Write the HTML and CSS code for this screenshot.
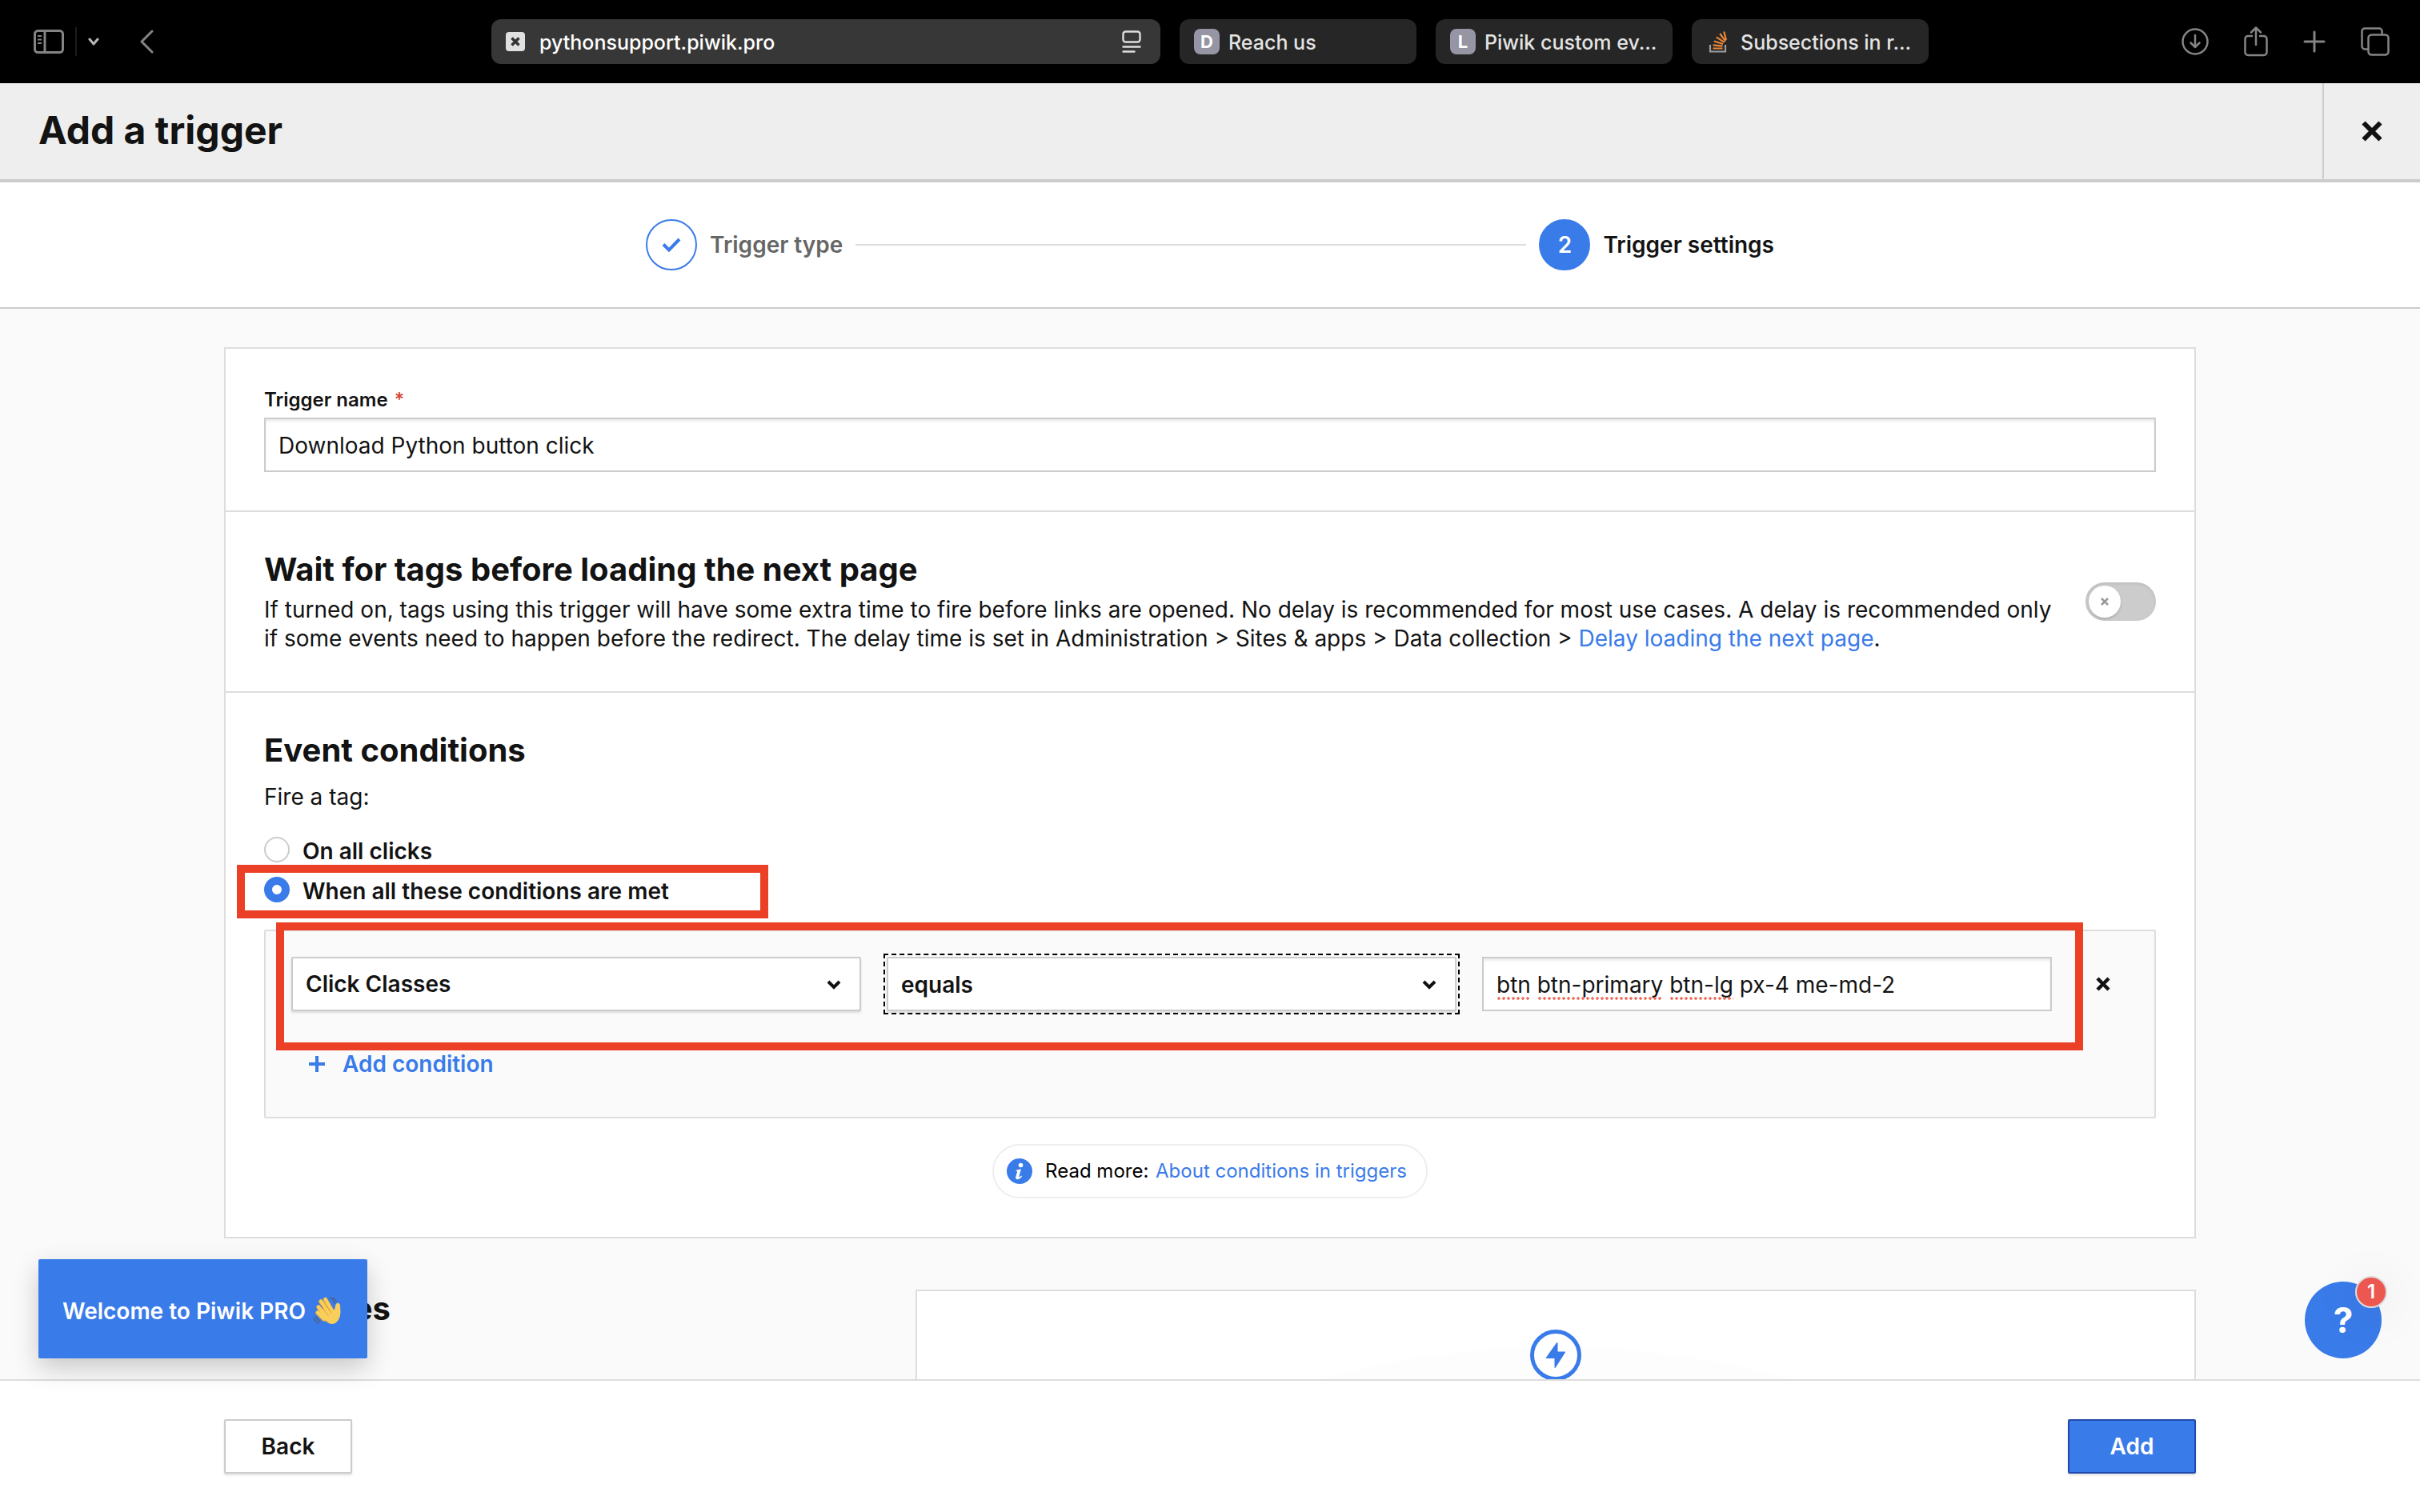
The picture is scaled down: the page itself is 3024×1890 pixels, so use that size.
FILE: index.html
```html
<!DOCTYPE html>
<html lang="en">
<head>
<meta charset="utf-8">
<title>Add a trigger</title>
<link rel="stylesheet" href="styles.css">
</head>
<body>
<nav class="browser" aria-label="Browser">
  <div class="browser-left">
    <button class="tool" aria-label="Sidebar"><svg width="38" height="30" viewBox="0 0 38 30" fill="none" stroke="currentColor" stroke-width="3"><rect x="1.5" y="1.5" width="35" height="27" rx="4"/><path d="M14 2v26"/><path d="M5 8h5M5 12.500h5M5 17h5" stroke-width="2"/></svg></button>
    <span class="tool-line"></span>
    <button class="tool tool-light" aria-label="Sidebar menu"><svg width="14" height="10" viewBox="0 0 14 10" fill="none" stroke="currentColor" stroke-width="3" stroke-linecap="round" stroke-linejoin="round"><path d="M2 2l5 6 5-6"/></svg></button>
    <button class="tool tool-back" aria-label="Go back"><svg width="18" height="30" viewBox="0 0 18 30" fill="none" stroke="currentColor" stroke-width="3" stroke-linecap="round" stroke-linejoin="round"><path d="M16 2L3 15l13 13"/></svg></button>
  </div>
  <div class="browser-tabs">
    <div class="address">
      <svg width="24" height="24" viewBox="0 0 24 24"><rect width="24" height="24" rx="4" fill="#e0e0e0"/><path d="M7.500 7.500l9 9M16.500 7.500l-9 9" stroke="#333" stroke-width="3.500"/></svg>
      <span class="tab-text address-text">pythonsupport.piwik.pro</span>
      <svg width="24" height="28" viewBox="0 0 24 28" fill="none" stroke="#ddd" stroke-width="2.400" stroke-linecap="round"><rect x="1.500" y="1.500" width="21" height="13" rx="3"/><path d="M1.500 20.500h21M1.500 26.500h14"/></svg>
    </div>
    <a class="tab" href="#"><span class="favicon">D</span><span class="tab-text">Reach us</span></a>
    <a class="tab" href="#"><span class="favicon">L</span><span class="tab-text">Piwik custom ev...</span></a>
    <a class="tab" href="#"><svg width="32" height="32" viewBox="0 0 32 32" fill="none"><path d="M5 20v8.500h19V20" stroke="#9a9da1" stroke-width="2.200"/><path d="M8.500 24.500h12M8.600 20.400l12 1.300M9.800 15.500l11.300 3.500M12.800 10.400l9.800 6.500M17.200 6l7 9.600M22.300 3.500l2.600 10.500" stroke="#e8873a" stroke-width="2.200"/></svg><span class="tab-text">Subsections in r...</span></a>
  </div>
  <div class="browser-right">
    <button class="tool" aria-label="Downloads"><svg width="34" height="34" viewBox="0 0 34 34" fill="none" stroke="currentColor" stroke-width="2.500" stroke-linecap="round" stroke-linejoin="round"><circle cx="17" cy="17" r="15.500"/><path d="M17 9v15M11.500 18.500L17 24l5.500-5.500"/></svg></button>
    <button class="tool" aria-label="Share"><svg width="30" height="38" viewBox="0 0 30 38" fill="none" stroke="currentColor" stroke-width="2.500" stroke-linecap="round" stroke-linejoin="round"><path d="M10 12H5a3.500 3.500 0 0 0-3.500 3.500v17A3.500 3.500 0 0 0 5 36h20a3.500 3.500 0 0 0 3.500-3.500v-17A3.500 3.500 0 0 0 25 12h-5M15 23V2M9 7.500L15 1.500l6 6"/></svg></button>
    <button class="tool" aria-label="New tab"><svg width="28" height="28" viewBox="0 0 28 28" fill="none" stroke="currentColor" stroke-width="3" stroke-linecap="round"><path d="M14 2v24M2 14h24"/></svg></button>
    <button class="tool" aria-label="All tabs"><svg width="36" height="36" viewBox="0 0 36 36" fill="none" stroke="currentColor" stroke-width="2.500"><rect x="9.500" y="9.500" width="25" height="25" rx="4"/><path d="M9 27.500H5A3.500 3.500 0 0 1 1.500 24V5A3.500 3.500 0 0 1 5 1.500h18A3.500 3.500 0 0 1 26.500 5v4"/></svg></button>
  </div>
</nav>

<header class="header">
  <h1 class="title">Add a trigger</h1>
  <button class="close" aria-label="Close"><svg width="26" height="26" viewBox="0 0 26 26" stroke="#111" stroke-width="6"><path d="M2.500 2.500l21 21M23.500 2.500l-21 21"/></svg></button>
</header>

<ol class="stepper">
  <li class="step step-done"><span class="step-mark"><svg width="24" height="20" viewBox="0 0 24 20" fill="none" stroke="#397be9" stroke-width="4"><path d="M2 9.500l7 7L22 3"/></svg></span>Trigger type</li>
  <li class="step-line" aria-hidden="true"></li>
  <li class="step"><span class="step-mark step-mark-on">2</span>Trigger settings</li>
</ol>

<main class="main">
  <form class="card" id="trigger">
    <section class="section">
      <label class="label" for="name">Trigger name <span class="required">*</span></label>
      <input class="field" id="name" type="text" value="Download Python button click">
    </section>
    <section class="section section-row">
      <div class="section-body">
        <h2 class="heading">Wait for tags before loading the next page</h2>
        <p class="text">If turned on, tags using this trigger will have some extra time to fire before links are opened. No delay is recommended for most use cases. A delay is recommended only if some events need to happen before the redirect. The delay time is set in Administration &gt; Sites &amp; apps &gt; Data collection &gt; <a class="link" href="#">Delay loading the next page</a>.</p>
      </div>
      <label class="toggle"><input class="toggle-input" type="checkbox" aria-label="Wait for tags"><span class="knob"><svg width="10" height="10" viewBox="0 0 10 10" stroke="#999" stroke-width="2.500"><path d="M1 1l8 8M9 1L1 9"/></svg></span></label>
    </section>
    <section class="section">
      <h2 class="heading">Event conditions</h2>
      <p class="text lead">Fire a tag:</p>
      <div class="options">
        <label class="option"><input class="radio" type="radio" name="fire">On all clicks</label>
        <label class="option"><input class="radio" type="radio" name="fire" checked>When all these conditions are met<span class="mark mark-option"></span></label>
      </div>
      <div class="conditions">
        <div class="condition">
          <div class="fields">
            <div class="select-wrap"><select class="field select" aria-label="Variable"><option>Click Classes</option></select><svg class="chevron" width="18" height="12" viewBox="0 0 18 12" fill="none" stroke="#111" stroke-width="4"><path d="M2 2l7 7 7-7"/></svg></div>
            <div class="select-wrap select-focus"><select class="field select" aria-label="Operator"><option>equals</option></select><svg class="chevron" width="18" height="12" viewBox="0 0 18 12" fill="none" stroke="#111" stroke-width="4"><path d="M2 2l7 7 7-7"/></svg></div>
            <div class="value-wrap"><input class="field" type="text" aria-label="Value" value="btn btn-primary btn-lg px-4 me-md-2"><span class="typos"><i class="typo typo-btn"></i><i class="typo typo-primary"></i><i class="typo typo-lg"></i></span></div>
            <span class="mark mark-fields"></span>
          </div>
          <button class="remove" type="button" aria-label="Remove condition"><svg width="18" height="18" viewBox="0 0 18 18" stroke="#111" stroke-width="4.500"><path d="M2 2l14 14M16 2L2 16"/></svg></button>
        </div>
        <button class="add-condition" type="button"><svg width="20" height="20" viewBox="0 0 20 20" stroke="#397be9" stroke-width="4"><path d="M10 0v20M0 10h20"/></svg>Add condition</button>
      </div>
      <div class="more">
        <svg width="32" height="32" viewBox="0 0 32 32"><circle cx="16" cy="16" r="16" fill="#397be9"/><circle cx="17.500" cy="8.500" r="2.800" fill="#fff"/><path d="M11.500 14.800c2-.6 4-1 6.500-1.500l-2.600 9c-.3 1.200.6 1.300 2.900-.8l.8.900c-2.600 3.200-5 4.200-6.800 3.600-1.300-.4-1.400-1.600-1-3l1.800-6.300c.2-.8-.2-1-1.600-.9z" fill="#fff"/></svg>
        <span class="more-text">Read more: <a class="link more-link" href="#">About conditions in triggers</a></span>
      </div>
    </section>
  </form>
  <section class="related">
    <h2 class="heading related-title">es</h2>
    <div class="card related-card">
      <svg width="64" height="64" viewBox="0 0 64 64"><circle cx="32" cy="32" r="29.500" fill="#fff" stroke="#397be9" stroke-width="5"/><path d="M33 16.500c.5-1 1.500-.6 1.500.5v10.500H43c1 0 1.200.5.800 1.300L32 47.300c-.6 1-1.500.7-1.500-.4V36H21c-1 0-1.300-.7-.8-1.500z" fill="#397be9"/></svg>
    </div>
  </section>
</main>

<footer class="footer">
  <button class="button">Back</button>
  <button class="button button-primary">Add</button>
</footer>

<div class="toast">Welcome to Piwik PRO
  <svg width="36" height="36" viewBox="0 0 36 36" fill="none" stroke-linecap="round" stroke-linejoin="round"><path d="M7 13l9 12M10 6l10 14M15.500 3.500L24 18M6 20l8 8" stroke="#e9a83a" stroke-width="5.500"/><path d="M7 12.500l9 12M10 5.500l10 14M15.500 3L24 17.500M6 19.500l8 8" stroke="#f9cf5c" stroke-width="4"/><path d="M8 21l5-6 11 3 3-2c1-3 1-7 3-8s4 1 4 3c0 4 1 7 0 12-1 6-5 11-10 11-4 0-7-3-10-6z" fill="#f9cf5c"/><path d="M12 14l7 9M15 9l8 11" stroke="#dd9c37" stroke-width="1"/><path d="M21 1c3 1 5 3 6 7M25 1c2 1 4 3 4 5M1 26c1 4 3 6 6 7M4 25c1 3 2 4 5 6" stroke="#4c6079" stroke-width="1.300"/></svg>
</div>
<button class="help">?<span class="badge">1</span></button>
</body>
</html>
```
FILE: styles.css
```css
* { box-sizing: border-box; }

body {
  margin: 0;
  height: 100vh;
  display: flex;
  flex-direction: column;
  overflow: hidden;
  background: #fafafa;
  color: #131313;
  font: 400 28px/36px Inter, "Liberation Sans", sans-serif;
}

button, input, select { font: inherit; color: inherit; }
button { padding: 0; border: 0; background: none; }
svg { display: block; flex: none; }
h1, h2, p, ol { margin: 0; padding: 0; }

/* browser bar */
.browser {
  flex: none;
  display: grid;
  grid-template-columns: 1fr 1796px 1fr;
  align-items: center;
  height: 104px;
  background: #000;
}
.browser-left, .browser-right { display: flex; align-items: center; }
.browser-left { padding-left: 42px; gap: 14px; }
.browser-right { padding-right: 38px; gap: 44px; justify-content: flex-end; }
.tool { color: #848484; }
.tool-light { color: #b8b8b8; }
.tool-back { margin-left: 36px; }
.tool-line { width: 2px; height: 36px; background: #1c1c1c; }
.browser-tabs { display: flex; gap: 24px; }
.address, .tab {
  display: flex;
  align-items: center;
  height: 56px;
  border-radius: 12px;
  font-size: 25px;
  font-weight: 500;
}
.address { flex: 1; padding: 0 24px 0 18px; gap: 18px; background: #373737; color: #fff; }
.tab-text { padding-top: 2px; }
.address-text { flex: 1; }
.tab { width: 296px; padding: 0 16px 0 18px; gap: 11px; background: #262626; color: #e3e3e3; text-decoration: none; white-space: nowrap; }
.favicon {
  flex: none;
  width: 32px;
  height: 32px;
  border-radius: 8px;
  background: #9595a3;
  color: #fff;
  font-size: 22px;
  font-weight: 700;
  line-height: 32px;
  text-align: center;
}

/* page header */
.header {
  flex: none;
  display: flex;
  height: 124px;
  border-bottom: 4px solid #ccc;
  background: #eee;
}
.title { flex: 1; padding-left: 48px; font-size: 48px; font-weight: 700; line-height: 118px; }
.close { display: grid; place-items: center; width: 122px; border-left: 2px solid #ccc; }

.stepper {
  flex: none;
  display: flex;
  align-items: center;
  justify-content: center;
  gap: 16px;
  height: 158px;
  padding: 0 807px;
  border-bottom: 2px solid #ccc;
  background: #fff;
  list-style: none;
}
.step { display: flex; align-items: center; gap: 16px; font-weight: 600; white-space: nowrap; }
.step-done { color: #666; }
.step-mark {
  display: grid;
  place-items: center;
  width: 64px;
  height: 64px;
  border: 2px solid #397be9;
  border-radius: 50%;
}
.step-mark-on { background: #397be9; color: #fff; }
.step-line { flex: 1; height: 2px; background: #ddd; }

/* content */
.main { flex: 1; min-height: 0; overflow: hidden; padding: 48px 280px 0; }
.card { border: 2px solid #ddd; background: #fff; }
.section { padding: 48px; }
.section + .section { border-top: 2px solid #ddd; }
.section-row { display: flex; align-items: center; gap: 36px; }
.section-body { flex: 1; }
.label { display: block; height: 38px; font-size: 24px; font-weight: 600; line-height: 32px; }
.required { margin-left: 2px; color: #d8432f; font-weight: 500; }
.field {
  display: block;
  width: 100%;
  height: 68px;
  padding: 2px 16px 0;
  border: 2px solid #ccc;
  border-radius: 0;
  outline: 0;
  background: #fff;
  box-shadow: inset 0 3px 3px #00000014;
}
.heading { font-size: 40px; font-weight: 700; line-height: 48px; }
.section-row .heading { margin-bottom: 8px; }
.link { color: #397be9; text-decoration: none; }

.toggle { position: relative; flex: none; width: 88px; height: 48px; }
.toggle-input { appearance: none; display: block; width: 100%; height: 100%; margin: 0; border-radius: 24px; background: #ccc; box-shadow: inset 0 2px 4px #00000014; }
.knob {
  position: absolute;
  top: 4px;
  left: 4px;
  display: grid;
  place-items: center;
  width: 40px;
  height: 40px;
  border-radius: 50%;
  background: #fff;
  box-shadow: 0 2px 3px #00000026;
}

.lead { margin: 16px 0 32px; }
.options { display: flex; flex-direction: column; gap: 14px; margin-bottom: 30px; }
.option { position: relative; display: flex; gap: 16px; font-weight: 600; }
.radio { appearance: none; width: 32px; height: 32px; margin: 0; border: 2px solid #ccc; border-radius: 50%; background: #fff; }
.radio:checked { border: 10px solid #397be9; }

.conditions { border: 2px solid #ddd; border-radius: 2px; background: #fafafa; padding: 32px 0 32px 32px; }
.condition { display: flex; margin-bottom: 32px; }
.fields { position: relative; flex: 1; display: grid; grid-template-columns: repeat(3, 1fr); gap: 32px; }
.select-wrap, .value-wrap { position: relative; }
.select { appearance: none; padding-top: 0; border-radius: 2px; font-weight: 600; box-shadow: 0 2px 3px #0000001f; }
.select-focus { outline: 2px dashed #000; outline-offset: 2px; }
.select-focus .select { padding-top: 2px; }
.chevron { position: absolute; top: 29px; right: 25px; pointer-events: none; }
.typos { position: absolute; left: 18px; bottom: 14px; display: flex; gap: 9px; }
.typo { height: 4px; background: radial-gradient(circle, #f0705f 40%, transparent 60%) 0 0 / 6px 4px; }
.typo-btn { width: 42px; }
.typo-primary { width: 156px; }
.typo-lg { width: 80px; }
.remove { display: grid; place-items: center; width: 128px; }
.add-condition { display: flex; align-items: center; gap: 22px; height: 68px; padding: 0 22px; color: #397be9; font-weight: 600; }

/* highlight frames drawn over the form */
.mark { position: absolute; border: 10px solid #eb4026; pointer-events: none; }
.mark-option { left: -34px; top: -15px; width: 664px; height: 67px; }
.mark-fields { inset: -43px -39px -49px -19px; }

.more {
  display: flex;
  align-items: center;
  gap: 16px;
  width: max-content;
  height: 68px;
  margin: 32px auto 0;
  padding: 0 24px 0 16px;
  border: 2px solid #eee;
  border-radius: 34px;
  color: #000;
  font-size: 24px;
}
.more-link { margin-left: 2px; }

.related { display: flex; justify-content: space-between; margin-top: 64px; }
.related-title { width: 208px; text-align: right; }
.related-card {
  display: flex;
  justify-content: center;
  width: 1600px;
  height: 400px;
  padding-top: 48px;
  background: radial-gradient(circle 1100px at 50% 1170px, #fdfdfd 100%, #fff 0);
}

.footer {
  flex: none;
  display: flex;
  justify-content: space-between;
  padding: 48px 280px;
  border-top: 2px solid #ddd;
  background: #fff;
}
.button {
  width: 160px;
  height: 68px;
  border: 2px solid #ccc;
  border-radius: 2px;
  background: #fff;
  box-shadow: 0 2px 3px #0000001f;
  font-weight: 600;
}
.button-primary { border-color: #2149ad; background: #397be9; color: #fff; }

.toast {
  position: absolute;
  left: 48px;
  bottom: 192px;
  display: flex;
  align-items: center;
  gap: 9px;
  height: 124px;
  padding: 6px 32px 0 30px;
  border-radius: 2px;
  background: #397be9;
  box-shadow: 0 12px 32px #00000033;
  color: #fff;
  font-weight: 600;
}
.help {
  position: absolute;
  right: 48px;
  bottom: 192px;
  width: 96px;
  height: 96px;
  border-radius: 50%;
  background: #397be9;
  color: #fff;
  font-size: 44px;
  font-weight: 700;
}
.badge {
  position: absolute;
  top: -7px;
  right: -7px;
  width: 40px;
  height: 40px;
  border: 2px solid #ddd;
  border-radius: 50%;
  background: #ec5850;
  box-shadow: 0 8px 60px #0000001a;
  font-size: 24px;
  font-weight: 600;
  line-height: 36px;
}
```
